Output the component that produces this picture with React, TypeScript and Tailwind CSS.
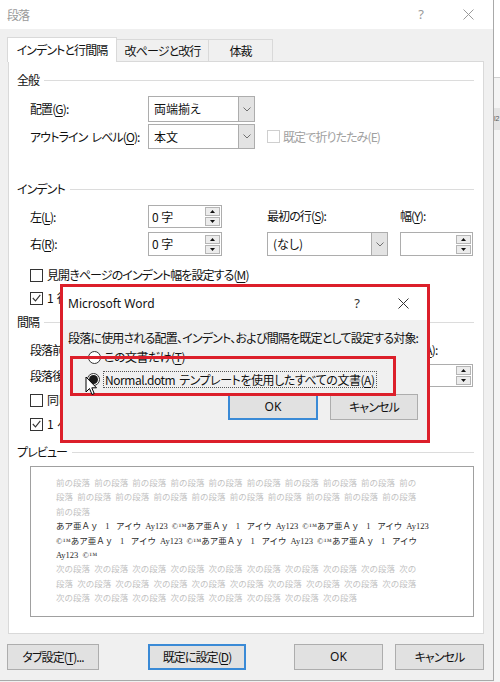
import React from "react";

const JP = "font-['Noto_Sans_CJK_JP',sans-serif] [font-feature-settings:'palt']";

function XIcon({ color = "#555" }: { color?: string }) {
  return (
    <svg width="11" height="11" viewBox="0 0 11 11">
      <path d="M0.5 0.5 L10.5 10.5 M10.5 0.5 L0.5 10.5" stroke={color} strokeWidth="1" fill="none" />
    </svg>
  );
}

function U({ children }: { children: React.ReactNode }) {
  return <span className="underline underline-offset-[2px] decoration-1">{children}</span>;
}

function Heading({ label, className = "" }: { label: string; className?: string }) {
  return (
    <div className={`flex items-center h-[16px] ${className}`}>
      <span className="pr-[5px]">{label}</span>
      <div className="flex-1 h-px bg-[#dcdcdc]" />
    </div>
  );
}

function Chevron() {
  return (
    <svg width="8" height="5" viewBox="0 0 8 5">
      <path d="M0.5 0.5 L4 4 L7.5 0.5" fill="none" stroke="#707070" strokeWidth="1" />
    </svg>
  );
}

function Select({ value, w }: { value: string; w: string }) {
  return (
    <div className={`flex h-full border border-[#adadad] bg-white ${w}`}>
      <span className="flex-1 flex items-center pl-[5px] tracking-normal">{value}</span>
      <span className="w-[16px] bg-[#e3e3e3] border-l border-[#adadad] flex items-center justify-center">
        <Chevron />
      </span>
    </div>
  );
}

function Spin({ value, w = "w-[74px]" }: { value: string; w?: string }) {
  return (
    <div className={`flex h-full border border-[#adadad] bg-white ${w}`}>
      <span className="flex-1 flex items-center pl-[3px] tracking-normal">{value}</span>
      <div className="w-[16px] flex flex-col justify-center gap-[1px] pr-[1px]">
        <div className="h-[9px] border border-[#b5b5b5] bg-[#ececec] flex items-center justify-center">
          <svg width="5" height="3" viewBox="0 0 5 3">
            <path d="M0 3 L2.5 0 L5 3Z" fill="#111" />
          </svg>
        </div>
        <div className="h-[9px] border border-[#b5b5b5] bg-[#ececec] flex items-center justify-center">
          <svg width="5" height="3" viewBox="0 0 5 3">
            <path d="M0 0 L2.5 3 L5 0Z" fill="#111" />
          </svg>
        </div>
      </div>
    </div>
  );
}

function CheckBox({ checked = false, disabled = false }: { checked?: boolean; disabled?: boolean }) {
  return (
    <span
      className={`w-[13px] h-[13px] border ${disabled ? "border-[#cfcfcf]" : "border-[#333333]"} bg-white flex items-center justify-center shrink-0`}
    >
      {checked && (
        <svg width="9" height="8" viewBox="0 0 9 8">
          <path d="M0.8 4 L3.5 6.8 L8.3 0.8" fill="none" stroke="#333" strokeWidth="1.1" />
        </svg>
      )}
    </span>
  );
}

function CheckRow({ checked, label, className = "" }: { checked?: boolean; label: React.ReactNode; className?: string }) {
  return (
    <div className={`flex items-center h-[16px] pl-[13px] whitespace-nowrap ${className}`}>
      <CheckBox checked={checked} />
      <span className="ml-[4px]">{label}</span>
    </div>
  );
}

function Btn({ children, className = "", def = false }: { children: React.ReactNode; className?: string; def?: boolean }) {
  return (
    <div
      className={`h-[26px] flex items-center justify-center bg-[#e1e1e1] ${def ? "border-2 border-[#3a8ad6]" : "border border-[#adadad]"} ${className}`}
    >
      {children}
    </div>
  );
}

function Radio({ checked = false }: { checked?: boolean }) {
  return (
    <span className="w-[13px] h-[13px] rounded-full border border-[#333] bg-white flex items-center justify-center shrink-0">
      {checked && <span className="w-[9px] h-[9px] rounded-full bg-[#1a1a1a]" />}
    </span>
  );
}

const group = (w: string, n: number) => Array(n).fill(w).join(" ");
const S = "\u2002\u2009\u200A";
const unit = `あア亜Ａｙ${S}1${S}アイウ Ay123 ©™`;

export default function App() {
  const prevLines = [group("前の段落", 9) + " 前の", "段落 " + group("前の段落", 9), "前の段落"];
  const nextLines = [group("次の段落", 9) + " 次の", "段落 " + group("次の段落", 9), group("次の段落", 8)];
  const blackLines = [
    `${unit}${unit}あア亜Ａｙ${S}1${S}アイウ Ay123`,
    `©™${unit}${unit}あア亜Ａｙ${S}1${S}アイウ`,
    "Ay123 ©™",
  ];

  return (
    <div className={`relative w-[500px] h-[682px] overflow-hidden bg-[#f0f0f0] flex text-[12px] text-[#111] tracking-[-0.9px] ${JP}`}>
      {/* main dialog */}
      <div className="w-[494px] h-[681px] border-r border-b border-[#a9a9a9] flex flex-col shrink-0">
        {/* title bar */}
        <div className="h-[29px] bg-white flex items-center pl-[7px] pr-[19px] shrink-0">
          <span className="text-[#9a9a9a]">段落</span>
          <span className="ml-auto text-[#9a9a9a] font-['Noto_Sans',sans-serif] text-[13px] tracking-normal">?</span>
          <span className="ml-[39px]">
            <XIcon color="#9a9a9a" />
          </span>
        </div>

        {/* tabs */}
        <div className="flex items-end h-[24px] mt-[8px] pl-[7px] shrink-0 relative z-10">
          <div className="h-[25px] w-[110px] bg-white border-l border-t border-r border-[#d9d9d9] flex items-center justify-center -mb-px">
            インデントと行間隔
          </div>
          <div className="h-[22px] w-[92px] bg-[#f0f0f0] border-t border-r border-[#d9d9d9] flex items-center justify-center">
            改ページと改行
          </div>
          <div className="h-[22px] w-[64px] bg-[#f0f0f0] border-t border-r border-[#d9d9d9] flex items-center justify-center">
            体裁
          </div>
        </div>

        {/* panel */}
        <div className="ml-[8px] w-[476px] h-[573px] bg-white border border-[#d9d9d9] flex flex-col pl-[8px] pr-[9px] pt-[10px] shrink-0">
          <Heading label="全般" />
          <div className="flex items-center h-[26px] mt-[8px] pl-[13px]">
            <span className="w-[118px]">
              配置(<U>G</U>):
            </span>
            <Select value="両端揃え" w="w-[107px]" />
          </div>
          <div className="flex items-center h-[25px] mt-[2px] pl-[13px]">
            <span className="w-[118px] whitespace-nowrap">
              アウトライン<span className="inline-block w-[4px]" />レベル(<U>O</U>):
            </span>
            <Select value="本文" w="w-[107px]" />
            <span className="ml-[12px] flex items-center text-[#a0a0a0]">
              <CheckBox disabled />
              <span className="ml-[3px]">既定で折りたたみ(E)</span>
            </span>
          </div>

          <Heading label="インデント" className="mt-[32px]" />
          <div className="flex items-center h-[23px] mt-[8px] pl-[13px]">
            <span className="w-[118px]">
              左(<U>L</U>):
            </span>
            <div className="w-[107px] h-full">
              <Spin value="0 字" />
            </div>
            <span className="ml-[12px] w-[121px] -mt-[2px]">
              最初の行(<U>S</U>):
            </span>
            <span className="ml-[12px] -mt-[2px]">
              幅(<U>Y</U>):
            </span>
          </div>
          <div className="flex items-center h-[24px] mt-[4px] pl-[13px]">
            <span className="w-[118px]">
              右(<U>R</U>):
            </span>
            <div className="w-[107px] h-full">
              <Spin value="0 字" />
            </div>
            <div className="ml-[12px] h-full">
              <Select value="(なし)" w="w-[121px]" />
            </div>
            <div className="ml-[12px] h-full">
              <Spin value="" w="w-[73px]" />
            </div>
          </div>

          <CheckRow
            className="mt-[11px]"
            label={
              <>
                見開きページのインデント幅を設定する(<U>M</U>)
              </>
            }
          />
          <CheckRow
            className="mt-[7px]"
            checked
            label={
              <>
                1<span className="inline-block w-[4px]" />行の文字数を指定時に右のインデント幅を自動調整する(<U>D</U>)
              </>
            }
          />

          <Heading label="間隔" className="mt-[8px]" />
          <div className="flex items-center h-[23px] mt-[8px] pl-[13px]">
            <span className="w-[118px]">
              段落前(<U>B</U>):
            </span>
            <div className="w-[107px] h-full">
              <Spin value="0 行" />
            </div>
            <span className="ml-[12px] w-[121px]">
              行間(<U>N</U>):
            </span>
            <span className="ml-[12px]">
              間隔(<U>A</U>):
            </span>
          </div>
          <div className="flex items-center h-[23px] mt-[3px] pl-[13px]">
            <span className="w-[118px]">
              段落後(<U>F</U>):
            </span>
            <div className="w-[107px] h-full">
              <Spin value="0 行" />
            </div>
            <div className="ml-[12px] h-full">
              <Select value="1 行" w="w-[121px]" />
            </div>
            <div className="ml-[12px] h-full">
              <Spin value="" w="w-[73px]" />
            </div>
          </div>

          <CheckRow
            className="mt-[5px]"
            label={
              <>
                同じスタイルの場合は段落間にスペースを追加しない(<U>C</U>)
              </>
            }
          />
          <CheckRow
            className="mt-[8px]"
            checked
            label={
              <>
                1<span className="inline-block w-[4px]" />ページの行数を指定時に文字を行グリッド線に合わせる(<U>W</U>)
              </>
            }
          />

          <Heading label="プレビュー" className="mt-[12px]" />
          <div className="ml-[13px] mt-[6px] w-[444px] h-[151px] border border-[#a0a0a0] bg-white pt-[9px] pl-[25px] font-['Liberation_Serif','Noto_Sans_CJK_JP',serif] [font-feature-settings:normal] text-[8.5px] leading-[14.4px] tracking-normal [word-spacing:2px] whitespace-pre overflow-hidden">
            {prevLines.map((l, i) => (
              <div key={"p" + i} className="text-[#c2c2c2]">
                {l}
              </div>
            ))}
            {blackLines.map((l, i) => (
              <div key={"b" + i} className="text-[#2a2a2a]">
                {l}
              </div>
            ))}
            {nextLines.map((l, i) => (
              <div key={"n" + i} className="text-[#c2c2c2]">
                {l}
              </div>
            ))}
          </div>
        </div>

        {/* bottom buttons */}
        <div className="flex items-center mt-[10px] pl-[7px] shrink-0">
          <Btn className="w-[92px]">
            タブ設定(<U>T</U>)...
          </Btn>
          <Btn def className="w-[98px] ml-[49px]">
            既定に設定(<U>D</U>)
          </Btn>
          <Btn className="w-[89px] ml-[48px] font-['Noto_Sans',sans-serif] tracking-normal">OK</Btn>
          <Btn className="w-[89px] ml-[12px]">キャンセル</Btn>
        </div>
      </div>

      {/* background window strip */}
      <div className="flex-1 flex flex-col bg-[#f4f4f4] overflow-hidden">
        <div className="h-[78px] bg-white border-b border-[#d0d0d0]" />
        <div className="h-[30px]" />
        <div className="h-[22px] bg-[#e4e4e4] text-[7px] text-[#555] leading-[22px] tracking-normal font-['Liberation_Sans',sans-serif]">l2</div>
      </div>

      {/* Microsoft Word confirm dialog with red annotation */}
      <div className="absolute left-[60px] top-[284px] w-[370px] h-[159px] border-[3px] border-[#dc1f2a]">
        <div className="relative w-full h-full bg-[#f0f0f0] flex flex-col">
          <div className="h-[33px] bg-white flex items-center pl-[5px] pr-[18px] shrink-0">
            <span className="font-['Noto_Sans',sans-serif] text-[12px] tracking-normal">Microsoft Word</span>
            <span className="ml-auto font-['Noto_Sans',sans-serif] text-[13px] text-[#333] tracking-normal">?</span>
            <span className="ml-[38px]">
              <XIcon color="#333" />
            </span>
          </div>
          <div className="pl-[5px] mt-[11px] h-[14px] leading-[14px] whitespace-nowrap tracking-[-0.8px]">
            段落に使用される配置、インデント、および間隔を既定として設定する対象:
          </div>
          <div className="flex items-center h-[16px] mt-[4px] pl-[25px]">
            <Radio />
            <span className="ml-[3px] tracking-[-0.45px]">
              この文書だけ(<U>T</U>)
            </span>
          </div>
          <div className="flex items-center h-[18px] mt-[5px] pl-[24px]">
            <Radio checked />
            <span className="ml-[3px] border border-dotted border-[#555] px-[1px] leading-[15px] tracking-[-0.45px] whitespace-nowrap">
              Normal.dotm<span className="inline-block w-[4px]" />テンプレートを使用したすべての文書(<U>A</U>)
            </span>
          </div>
          <div className="flex mt-[6px] pl-[165px]">
            <Btn def className="w-[90px] h-[25px] font-['Noto_Sans',sans-serif] tracking-normal">
              OK
            </Btn>
            <Btn className="w-[88px] h-[25px] ml-[12px]">キャンセル</Btn>
          </div>

          {/* inner red highlight */}
          <div className="absolute left-[7px] top-[69px] w-[326px] h-[40px] border-[3px] border-[#dc1f2a]" />

          {/* mouse cursor */}
          <svg className="absolute left-[22px] top-[89px]" width="13" height="20" viewBox="0 0 13 20">
            <path
              d="M1 1 L1 16 L4.5 12.5 L7 18.5 L9.2 17.5 L6.8 11.8 L11.5 11.8 Z"
              fill="#ffffff"
              stroke="#000"
              strokeWidth="1"
              strokeLinejoin="round"
            />
          </svg>
        </div>
      </div>
    </div>
  );
}
